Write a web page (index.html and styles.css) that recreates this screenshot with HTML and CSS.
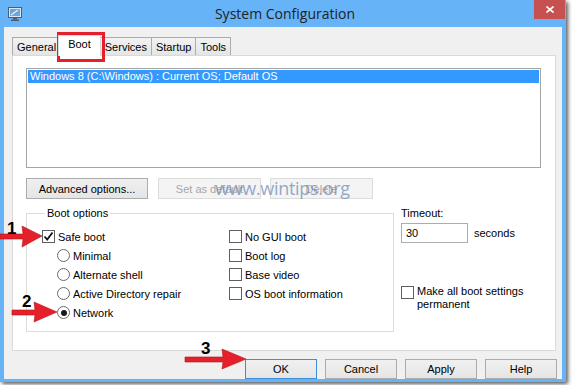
FILE: index.html
```html
<!DOCTYPE html>
<html lang="en">
<head>
    <meta charset="UTF-8">
    <title>System Configuration</title>
    <link rel="stylesheet" href="styles.css">
</head>
<body>
    <div class="stage">
        <div class="window">
            <div class="titlebar">
                <svg class="app-icon" viewBox="0 0 14 14">
                    <rect x="0.5" y="0.5" width="13" height="10" fill="#dfe9f3" stroke="#4a5d75"/>
                    <rect x="2" y="2" width="10" height="7" fill="#6aa6dc"/>
                    <path d="M3 8 L10 3" stroke="#eaf3fb" stroke-width="1.2"/>
                    <rect x="5" y="11" width="4" height="1.5" fill="#4a5d75"/>
                    <rect x="3" y="12.5" width="8" height="1.5" fill="#4a5d75"/>
                </svg>
                <div class="title">System Configuration</div>
                <div class="close">
                    <svg viewBox="0 0 8 7" width="8" height="7">
                        <path d="M0.5 0.5 L7.5 6.5 M7.5 0.5 L0.5 6.5" stroke="#fff" stroke-width="1.6"/>
                    </svg>
                </div>
            </div>
            <div class="client">
                <div class="tabs">
                    <div class="tab">General</div>
                    <div class="tab active">Boot</div>
                    <div class="tab">Services</div>
                    <div class="tab">Startup</div>
                    <div class="tab">Tools</div>
                </div>
                <div class="panel">
                    <div class="os-list">
                        <div class="os-row selected">Windows 8 (C:\Windows) : Current OS; Default OS</div>
                    </div>
                    <div class="button-row">
                        <button class="btn advanced">Advanced options...</button>
                        <button class="btn small" disabled>Set as default</button>
                        <button class="btn small delete" disabled>Delete</button>
                    </div>
                    <div class="options">
                        <fieldset class="group">
                            <legend>Boot options</legend>
                            <div class="group-cols">
                                <div class="col left-col">
                                    <div class="row"><span class="box checked"><svg viewBox="0 0 11 11" width="11" height="11"><path d="M1.5 5.5 L4.2 8.5 L9.5 1.5" stroke="#111" stroke-width="1.8" fill="none"/></svg></span>Safe boot</div>
                                    <div class="row sub"><span class="radio"></span>Minimal</div>
                                    <div class="row sub"><span class="radio"></span>Alternate shell</div>
                                    <div class="row sub"><span class="radio"></span>Active Directory repair</div>
                                    <div class="row sub"><span class="radio on"></span>Network</div>
                                </div>
                                <div class="col">
                                    <div class="row"><span class="box"></span>No GUI boot</div>
                                    <div class="row"><span class="box"></span>Boot log</div>
                                    <div class="row"><span class="box"></span>Base video</div>
                                    <div class="row"><span class="box"></span>OS boot information</div>
                                </div>
                            </div>
                        </fieldset>
                        <div class="timeout">
                            <div class="timeout-label">Timeout:</div>
                            <div class="timeout-row">
                                <div class="input">30</div>
                                <span>seconds</span>
                            </div>
                            <div class="permanent">
                                <span class="box"></span>
                                <span class="permanent-text">Make all boot settings permanent</span>
                            </div>
                        </div>
                    </div>
                </div>
                <div class="footer">
                    <button class="btn footer-btn default">OK</button>
                    <button class="btn footer-btn">Cancel</button>
                    <button class="btn footer-btn">Apply</button>
                    <button class="btn footer-btn">Help</button>
                </div>
            </div>
        </div>

        <!-- annotations drawn over the dialog -->
        <div class="mark-box"></div>
        <div class="watermark">www.wintips.org</div>
        <svg class="arrows" viewBox="0 0 572 385" width="572" height="385">
            <g fill="#e5202a" stroke="#b3151c" stroke-width="0.6">
                <polygon points="0,234 23,234 22,226 42,236 22,247 23,239 0,239"/>
                <polygon points="12,310 35,310 34,302 57,312 34,322 35,315 12,315"/>
                <polygon points="185,357 223,357 222,349 246,359 222,369 223,362 185,362"/>
            </g>
        </svg>
        <span class="step step1">1</span>
        <span class="step step2">2</span>
        <span class="step step3">3</span>
    </div>
</body>
</html>
```

FILE: styles.css
```css
body {
    margin: 0;
    padding: 0;
    background-color: #fff;
    font-family: "Liberation Sans", Arial, sans-serif;
    font-size: 11px;
    color: #000;
}
.stage {
    position: relative;
    width: 572px;
    height: 385px;
    overflow: hidden;
}
.window {
    width: 566px;
    height: 382px;
    background-color: #66b3f8;
    box-shadow: 2px 2px 4px rgba(0, 0, 0, 0.65);
    display: flex;
    flex-direction: column;
}
.titlebar {
    height: 27px;
    display: flex;
    align-items: flex-start;
}
.app-icon {
    width: 14px;
    height: 14px;
    margin: 7px 0 0 8px;
}
.title {
    flex: 1;
    text-align: center;
    font-family: "Open Sans", sans-serif;
    font-size: 14px;
    line-height: 28px;
    color: #222;
    padding-left: 14px;
}
.close {
    width: 31px;
    height: 19px;
    margin-right: 1px;
    background-color: #c75050;
    display: flex;
    align-items: center;
    justify-content: center;
}
.client {
    flex: 1;
    margin: 0 4px 3px 4px;
    background-color: #f0f0f0;
    padding: 10px 6px 0 8px;
    display: flex;
    flex-direction: column;
}
.tabs {
    height: 18px;
    display: flex;
    align-items: flex-end;
}
.tab {
    height: 17px;
    line-height: 18px;
    padding: 0 4px;
    border: 1px solid #acacac;
    border-bottom: none;
    margin-right: -1px;
    background: linear-gradient(#f2f2f2, #e5e5e5);
}
.tab.active {
    position: relative;
    z-index: 1;
    height: 20px;
    line-height: 17px;
    margin: 0 -1px -1px -2px;
    padding: 0 9px;
    background: #fff;
    border-color: #d9d9d9;
}
.panel {
    height: 282px;
    border: 1px solid #d9d9d9;
    background-color: #fff;
    padding: 12px 0 0 13px;
}
.os-list {
    width: 513px;
    height: 97px;
    border: 1px solid #a5a5a5;
    padding: 1px 0 0 0;
}
.os-row {
    height: 13px;
    line-height: 13px;
    margin: 0 1px;
    padding-left: 2px;
}
.os-row.selected {
    background-color: #3399ff;
    color: #fff;
}
.button-row {
    display: flex;
    margin-top: 10px;
}
.btn {
    font-family: inherit;
    font-size: 11px;
    color: #000;
    height: 21px;
    padding: 0;
    border: 1px solid #acacac;
    background: linear-gradient(#f0f0f0, #e5e5e5);
}
.btn.advanced {
    width: 122px;
}
.btn.small {
    width: 103px;
    margin-left: 10px;
}
.btn.delete {
    margin-left: 9px;
}
.btn:disabled {
    color: #a6a6a6;
    border-color: #dcdcdc;
    background: #f4f4f4;
}
.options {
    display: flex;
    margin-top: 8px;
}
.group {
    width: 351px;
    margin: 0;
    padding: 7px 0 9px 15px;
    border: 1px solid #dcdcdc;
}
.group legend {
    padding: 0 2px;
    margin-left: 3px;
    line-height: 13px;
}
.group-cols {
    display: flex;
}
.col.left-col {
    width: 187px;
}
.row {
    height: 19px;
    display: flex;
    align-items: center;
}
.row.sub {
    padding-left: 15px;
}
.box {
    width: 11px;
    height: 11px;
    border: 1px solid #5f5f5f;
    background-color: #fff;
    margin-right: 3px;
    flex: none;
    display: flex;
}
.radio {
    width: 11px;
    height: 11px;
    border: 1px solid #6a6a6a;
    border-radius: 50%;
    margin-right: 3px;
    display: flex;
    align-items: center;
    justify-content: center;
}
.radio.on::after {
    content: "";
    width: 6px;
    height: 6px;
    border-radius: 50%;
    background-color: #1a1a1a;
}
.timeout {
    margin-left: 7px;
    display: flex;
    flex-direction: column;
}
.timeout-label {
    line-height: 13px;
}
.timeout-row {
    display: flex;
    align-items: center;
    margin-top: 3px;
}
.input {
    width: 61px;
    height: 18px;
    line-height: 18px;
    padding-left: 4px;
    border: 1px solid #abadb3;
    margin-right: 6px;
}
.permanent {
    display: flex;
    align-items: flex-start;
    margin-top: 43px;
}
.permanent-text {
    width: 120px;
    line-height: 13px;
    margin-top: -1px;
}
.footer {
    display: flex;
    justify-content: flex-end;
    gap: 8px;
    padding-top: 8px;
    margin-right: -1px;
}
.btn.footer-btn {
    width: 72px;
    height: 20px;
}
.btn.default {
    border-color: #3c8fd6;
}
.mark-box {
    position: absolute;
    left: 57px;
    top: 32px;
    width: 42px;
    height: 24px;
    border: 3px solid #e3202b;
}
.watermark {
    position: absolute;
    left: 215px;
    top: 176px;
    font-family: "Open Sans", sans-serif;
    font-size: 18px;
    letter-spacing: -0.3px;
    color: rgba(115, 140, 180, 0.75);
}
.arrows {
    position: absolute;
    left: 0;
    top: 0;
}
.step {
    position: absolute;
    font-family: "Liberation Sans", Arial, sans-serif;
    font-weight: bold;
    font-size: 17px;
    line-height: 17px;
}
.step1 {
    left: 7px;
    top: 220px;
}
.step2 {
    left: 22px;
    top: 293px;
}
.step3 {
    left: 201px;
    top: 340px;
}
```
